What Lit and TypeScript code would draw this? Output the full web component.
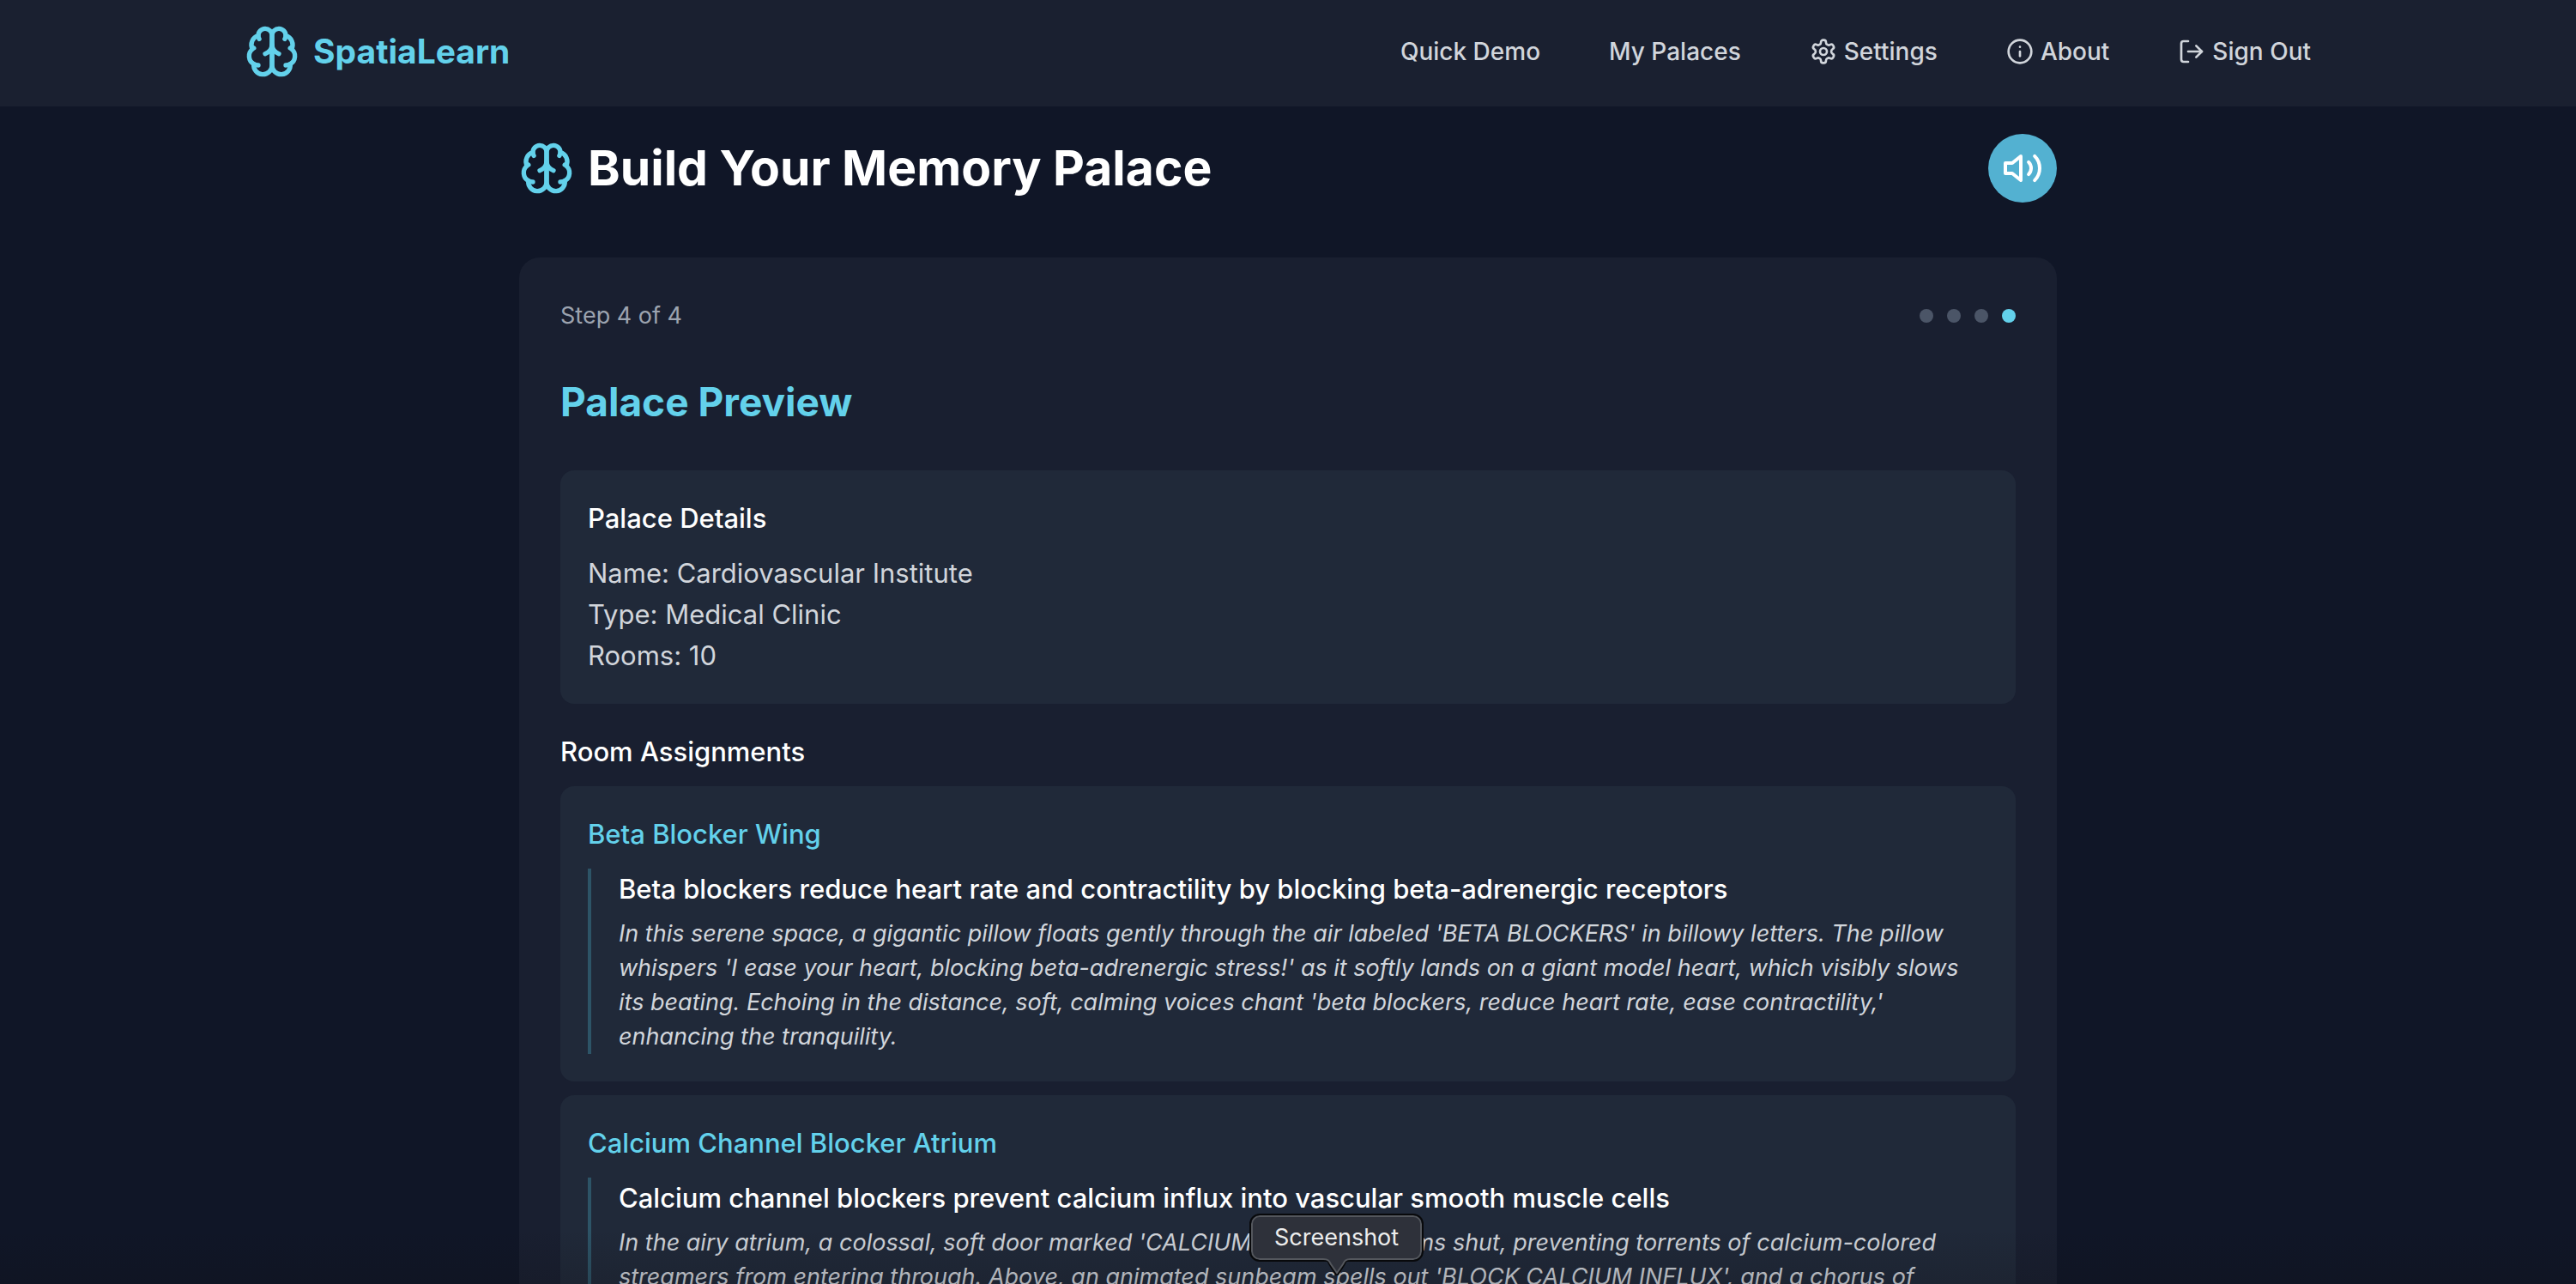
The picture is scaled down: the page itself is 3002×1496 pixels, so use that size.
import { LitElement, html, css, svg } from "lit";
import { customElement, property } from "lit/decorators.js";

const shapes: Record<string, unknown> = {
  brain: svg`
    <path d="M12 5a3 3 0 1 0-5.997.125 4 4 0 0 0-2.526 5.77 4 4 0 0 0 .556 6.588A4 4 0 1 0 12 18Z" />
    <path d="M12 5a3 3 0 1 1 5.997.125 4 4 0 0 1 2.526 5.77 4 4 0 0 1-.556 6.588A4 4 0 1 1 12 18Z" />
    <path d="M15 13a4.5 4.5 0 0 1-3-4 4.5 4.5 0 0 1-3 4" />
    <path d="M17.599 6.5a3 3 0 0 0 .399-1.375" />
    <path d="M6.003 5.125A3 3 0 0 0 6.401 6.5" />
    <path d="M3.477 10.896a4 4 0 0 1 .585-.396" />
    <path d="M19.938 10.5a4 4 0 0 1 .585.396" />
    <path d="M6 18a4 4 0 0 1-1.967-.516" />
    <path d="M19.967 17.484A4 4 0 0 1 18 18" />`,
  settings: svg`
    <path d="M12.22 2h-.44a2 2 0 0 0-2 2v.18a2 2 0 0 1-1 1.73l-.43.25a2 2 0 0 1-2 0l-.15-.08a2 2 0 0 0-2.73.73l-.22.38a2 2 0 0 0 .73 2.73l.15.1a2 2 0 0 1 1 1.72v.51a2 2 0 0 1-1 1.74l-.15.09a2 2 0 0 0-.73 2.73l.22.38a2 2 0 0 0 2.73.73l.15-.08a2 2 0 0 1 2 0l.43.25a2 2 0 0 1 1 1.73V20a2 2 0 0 0 2 2h.44a2 2 0 0 0 2-2v-.18a2 2 0 0 1 1-1.73l.43-.25a2 2 0 0 1 2 0l.15.08a2 2 0 0 0 2.73-.73l.22-.39a2 2 0 0 0-.73-2.73l-.15-.08a2 2 0 0 1-1-1.74v-.5a2 2 0 0 1 1-1.74l.15-.09a2 2 0 0 0 .73-2.73l-.22-.38a2 2 0 0 0-2.73-.73l-.15.08a2 2 0 0 1-2 0l-.43-.25a2 2 0 0 1-1-1.73V4a2 2 0 0 0-2-2z" />
    <circle cx="12" cy="12" r="3" />`,
  info: svg`
    <circle cx="12" cy="12" r="10" />
    <path d="M12 16v-4" />
    <path d="M12 8h.01" />`,
  logout: svg`
    <path d="M9 21H5a2 2 0 0 1-2-2V5a2 2 0 0 1 2-2h4" />
    <path d="m16 17 5-5-5-5" />
    <path d="M21 12H9" />`,
  volume: svg`
    <path d="M11 5 6 9H2v6h4l5 4V5z" />
    <path d="M15.54 8.46a5 5 0 0 1 0 7.07" />
    <path d="M19.07 4.93a10 10 0 0 1 0 14.14" />`,
};

@customElement("line-icon")
class LineIcon extends LitElement {
  @property() name = "";

  static styles = css`
    :host {
      display: inline-flex;
      flex: none;
    }
    .shape {
      width: 100%;
      height: 100%;
      fill: none;
      stroke: currentColor;
      stroke-width: 2;
      stroke-linecap: round;
      stroke-linejoin: round;
    }
  `;

  render() {
    return html`<svg class="shape" viewBox="0 0 24 24" aria-hidden="true">${shapes[this.name]}</svg>`;
  }
}

interface Room {
  name: string;
  concept: string;
  scene: string;
}

@customElement("room-card")
class RoomCard extends LitElement {
  @property({ attribute: false }) room!: Room;

  static styles = css`
    :host {
      display: block;
      padding: 32px;
      border-radius: 16px;
      background: #202939;
    }
    .name,
    .concept,
    .scene {
      margin: 0;
    }
    .name,
    .concept {
      font-size: 31px;
      line-height: 48px;
      font-weight: 500;
    }
    .name {
      color: #63d1eb;
    }
    .entry {
      margin-top: 16px;
      padding-left: 32px;
      border-left: 4px solid #2d5467;
    }
    .concept {
      color: #ffffff;
    }
    .scene {
      margin-top: 8px;
      font-size: 27px;
      line-height: 40px;
      font-style: italic;
      color: #d1d5db;
    }
  `;

  render() {
    return html`
      <h4 class="name">${this.room.name}</h4>
      <div class="entry">
        <p class="concept">${this.room.concept}</p>
        <p class="scene">${this.room.scene}</p>
      </div>
    `;
  }
}

@customElement("app-root")
class AppRoot extends LitElement {
  private links = [
    { label: "Quick Demo", icon: "" },
    { label: "My Palaces", icon: "" },
    { label: "Settings", icon: "settings" },
    { label: "About", icon: "info" },
  ];

  private details = [
    ["Name", "Cardiovascular Institute"],
    ["Type", "Medical Clinic"],
    ["Rooms", "10"],
  ];

  private step = 4;
  private steps = [1, 2, 3, 4];

  private rooms: Room[] = [
    {
      name: "Beta Blocker Wing",
      concept: "Beta blockers reduce heart rate and contractility by blocking beta-adrenergic receptors",
      scene:
        "In this serene space, a gigantic pillow floats gently through the air labeled 'BETA BLOCKERS' in billowy letters. The pillow whispers 'I ease your heart, blocking beta-adrenergic stress!' as it softly lands on a giant model heart, which visibly slows its beating. Echoing in the distance, soft, calming voices chant 'beta blockers, reduce heart rate, ease contractility,' enhancing the tranquility.",
    },
    {
      name: "Calcium Channel Blocker Atrium",
      concept: "Calcium channel blockers prevent calcium influx into vascular smooth muscle cells",
      scene:
        "In the airy atrium, a colossal, soft door marked 'CALCIUM CHANNEL' slams shut, preventing torrents of calcium-colored streamers from entering through. Above, an animated sunbeam spells out 'BLOCK CALCIUM INFLUX', and a chorus of",
    },
  ];

  static styles = css`
    :host {
      display: block;
      position: relative;
      height: 100vh;
      overflow: hidden;
      background: #101627;
      color: #ffffff;
      font-family: Inter, "Liberation Sans", sans-serif;
    }
    .bar {
      background: #1a2030;
    }
    .bar-inner {
      box-sizing: border-box;
      max-width: 2560px;
      margin: 0 auto;
      padding: 28px 64px 32px;
      display: flex;
      align-items: center;
      justify-content: space-between;
    }
    .brand {
      display: flex;
      align-items: center;
      gap: 16px;
      color: #63d1eb;
      text-decoration: none;
      font-size: 39px;
      line-height: 56px;
      font-weight: 700;
    }
    .big-icon {
      width: 64px;
      height: 64px;
      color: #63d1eb;
    }
    .nav {
      display: flex;
      align-items: center;
      gap: 32px;
    }
    .nav-item {
      display: flex;
      align-items: center;
      gap: 8px;
      padding: 0 24px;
      border: 0;
      background: none;
      color: #d1d5db;
      font-family: inherit;
      font-size: 28px;
      line-height: 40px;
      font-weight: 500;
      text-decoration: none;
      cursor: pointer;
    }
    .small-icon {
      width: 32px;
      height: 32px;
    }
    .page {
      box-sizing: border-box;
      max-width: 1792px;
      margin: 0 auto;
      padding-top: 32px;
    }
    .page-head {
      display: flex;
      align-items: center;
      justify-content: space-between;
      margin-bottom: 64px;
    }
    .page-title {
      display: flex;
      align-items: center;
      gap: 16px;
      margin: 0;
      font-size: 57px;
      line-height: 72px;
      font-weight: 700;
    }
    .sound {
      display: flex;
      align-items: center;
      justify-content: center;
      width: 80px;
      height: 80px;
      padding: 0;
      border: 0;
      border-radius: 50%;
      background: #53b1d1;
      color: #ffffff;
      cursor: pointer;
    }
    .sound-icon {
      width: 48px;
      height: 48px;
    }
    .card {
      padding: 48px;
      border-radius: 24px;
      background: #191f30;
    }
    .progress {
      display: flex;
      align-items: center;
      justify-content: space-between;
      font-size: 27px;
      line-height: 40px;
      color: #9ca3af;
    }
    .dots {
      display: flex;
      gap: 16px;
    }
    .dot {
      width: 16px;
      height: 16px;
      border-radius: 50%;
      background: #4b5567;
    }
    .dot.current {
      background: #63d1eb;
    }
    .section-title {
      margin: 48px 0;
      font-size: 46px;
      line-height: 64px;
      font-weight: 700;
      color: #63d1eb;
    }
    .details {
      padding: 32px;
      border-radius: 16px;
      background: #202939;
    }
    .sub-title {
      margin: 0 0 16px;
      font-size: 31px;
      line-height: 48px;
      font-weight: 500;
    }
    .detail {
      margin: 0;
      font-size: 31px;
      line-height: 48px;
      color: #d1d5db;
    }
    .rooms {
      margin-top: 32px;
    }
    .room-list {
      display: flex;
      flex-direction: column;
      gap: 16px;
    }
    .shade {
      position: absolute;
      left: 0;
      right: 0;
      bottom: 0;
      height: 64px;
      background: linear-gradient(to bottom, rgba(16, 16, 20, 0), rgba(16, 16, 20, 0.2));
      pointer-events: none;
    }
    .tooltip {
      position: absolute;
      bottom: 28px;
      left: 1458px;
      padding: 7px 25px;
      border: 2px solid #54575d;
      border-radius: 10px;
      outline: 2px solid #08090b;
      background: #2e313a;
      color: #eceded;
      font-size: 27px;
      line-height: 34px;
    }
    .tip {
      position: absolute;
      top: 100%;
      left: 50%;
      width: 36px;
      height: 20px;
      margin-left: -18px;
    }
  `;

  render() {
    return html`
      <header class="bar">
        <div class="bar-inner">
          <a class="brand" href="#home">
            <line-icon class="big-icon" name="brain"></line-icon>
            <span>SpatiaLearn</span>
          </a>
          <nav class="nav">
            ${this.links.map(
              (link) => html`
                <a class="nav-item" href="#${link.label.toLowerCase().replace(" ", "-")}">
                  ${link.icon ? html`<line-icon class="small-icon" name=${link.icon}></line-icon>` : ""}
                  <span>${link.label}</span>
                </a>
              `,
            )}
            <button class="nav-item" type="button">
              <line-icon class="small-icon" name="logout"></line-icon>
              <span>Sign Out</span>
            </button>
          </nav>
        </div>
      </header>
      <main class="page">
        <div class="page-head">
          <h1 class="page-title">
            <line-icon class="big-icon" name="brain"></line-icon>
            <span>Build Your Memory Palace</span>
          </h1>
          <button class="sound" type="button" aria-label="Toggle sound">
            <line-icon class="sound-icon" name="volume"></line-icon>
          </button>
        </div>
        <div class="card">
          <div class="progress">
            <span>Step ${this.step} of ${this.steps.length}</span>
            <div class="dots">
              ${this.steps.map((n) => html`<span class="dot ${n === this.step ? "current" : ""}"></span>`)}
            </div>
          </div>
          <h2 class="section-title">Palace Preview</h2>
          <section class="details">
            <h3 class="sub-title">Palace Details</h3>
            ${this.details.map(([key, value]) => html`<p class="detail">${key}: ${value}</p>`)}
          </section>
          <section class="rooms">
            <h3 class="sub-title">Room Assignments</h3>
            <div class="room-list">
              ${this.rooms.map((room) => html`<room-card .room=${room}></room-card>`)}
            </div>
          </section>
        </div>
      </main>
      <div class="shade"></div>
      <div class="tooltip" role="tooltip">
        Screenshot
        <svg class="tip" viewBox="0 0 36 20" aria-hidden="true">
          <path d="M2 0C8 0 9 3 11 7L18 18L25 7C27 3 28 0 34 0" fill="#2e313a" stroke="#08090b" stroke-width="5" />
          <path d="M2 1C8 1 9 3 11 7L18 17L25 7C27 3 28 1 34 1V-3H2Z" fill="#2e313a" />
          <path d="M2 1C8 1 9 3 11 7L18 17L25 7C27 3 28 1 34 1" fill="none" stroke="#54575d" stroke-width="2" />
        </svg>
      </div>
    `;
  }
}
